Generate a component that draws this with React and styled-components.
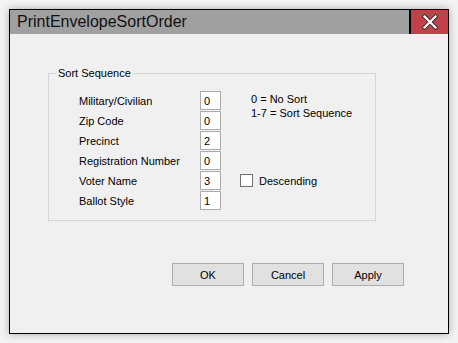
import React from "react";
import styled, { createGlobalStyle } from "styled-components";

const GlobalStyle = createGlobalStyle`
  html, body {
    margin: 0;
    padding: 0;
    background: #f3f3f3;
    font-family: "Liberation Sans", Arial, sans-serif;
  }
`;

const rows = [
  { label: "Military/Civilian", value: "0" },
  { label: "Zip Code", value: "0" },
  { label: "Precinct", value: "2" },
  { label: "Registration Number", value: "0" },
  { label: "Voter Name", value: "3" },
  { label: "Ballot Style", value: "1" },
];

const App = () => {
  return (
    <Page>
      <GlobalStyle />
      <Window>
        <TitleBar>
          <Title>PrintEnvelopeSortOrder</Title>
          <CloseButton aria-label="Close">
            <svg width="16" height="16" viewBox="0 0 16 16">
              <path
                d="M2.5 2.5 L13.5 13.5 M13.5 2.5 L2.5 13.5"
                stroke="#3a2a2c"
                strokeWidth="4"
                strokeLinecap="square"
              />
              <path
                d="M2.5 2.5 L13.5 13.5 M13.5 2.5 L2.5 13.5"
                stroke="#ffffff"
                strokeWidth="2.2"
                strokeLinecap="square"
              />
            </svg>
          </CloseButton>
        </TitleBar>

        <Body>
          <GroupBox>
            <Legend>Sort Sequence</Legend>
            <FieldGrid>
              {rows.map((row, i) => (
                <React.Fragment key={row.label}>
                  <FieldLabel style={{ gridRow: i + 1 }}>{row.label}</FieldLabel>
                  <NumberBox style={{ gridRow: i + 1 }} defaultValue={row.value} />
                </React.Fragment>
              ))}
              <Notes>
                <span>0 = No Sort</span>
                <span>1-7 = Sort Sequence</span>
              </Notes>
              <CheckRow>
                <CheckBox />
                <span>Descending</span>
              </CheckRow>
            </FieldGrid>
          </GroupBox>

          <ButtonRow>
            <Button>OK</Button>
            <Button>Cancel</Button>
            <Button>Apply</Button>
          </ButtonRow>
        </Body>
      </Window>
    </Page>
  );
};

export default App;

/* ---------------- Styled Components ---------------- */

const Page = styled.div`
  width: 458px;
  height: 343px;
  padding: 9px;
  box-sizing: border-box;
`;

const Window = styled.div`
  width: 440px;
  height: 325px;
  box-sizing: border-box;
  border: 1px solid #000;
  background: #f0f0f0;
  box-shadow: 0 0 8px rgba(0, 0, 0, 0.3);
  display: flex;
  flex-direction: column;
`;

const TitleBar = styled.div`
  height: 24px;
  background: #a0a0a0;
  display: flex;
  align-items: stretch;
  justify-content: space-between;
`;

const Title = styled.div`
  font-size: 16px;
  color: #111;
  padding-left: 7px;
  line-height: 24px;
`;

const CloseButton = styled.div`
  width: 37px;
  background: #c1404a;
  border-left: 2px solid #000;
  display: flex;
  align-items: center;
  justify-content: center;
`;

const Body = styled.div`
  flex: 1;
  padding: 39px 0 0 38px;
  font-size: 11px;
  color: #000;
`;

const GroupBox = styled.div`
  position: relative;
  width: 328px;
  height: 148px;
  box-sizing: border-box;
  border: 1px solid #d6d6d6;
  padding: 17px 0 0 30px;
`;

const Legend = styled.span`
  position: absolute;
  top: -7px;
  left: 7px;
  padding: 0 2px;
  background: #f0f0f0;
  font-size: 11px;
  line-height: 13px;
`;

const FieldGrid = styled.div`
  display: grid;
  grid-template-columns: 121px 21px 19px auto;
  grid-auto-rows: 20px;
`;

const FieldLabel = styled.div`
  grid-column: 1;
  display: flex;
  align-items: center;
  line-height: 13px;
`;

const NumberBox = styled.input`
  grid-column: 2;
  width: 21px;
  height: 19px;
  box-sizing: border-box;
  border: 1px solid #ababab;
  background: #fff;
  padding: 0 0 0 3px;
  margin: 0;
  font-family: "Liberation Sans", Arial, sans-serif;
  font-size: 11px;
  color: #000;
  outline: none;
`;

const Notes = styled.div`
  grid-column: 4;
  grid-row: 1 / span 2;
  display: flex;
  flex-direction: column;
  padding: 1px 0 0 11px;
  line-height: 14px;
`;

const CheckRow = styled.div`
  grid-column: 4;
  grid-row: 5;
  display: flex;
  align-items: center;
  gap: 6px;
  height: 19px;
`;

const CheckBox = styled.span`
  width: 13px;
  height: 13px;
  box-sizing: border-box;
  border: 1px solid #707070;
  background: #fff;
`;

const ButtonRow = styled.div`
  display: flex;
  gap: 8px;
  margin: 42px 0 0 124px;
`;

const Button = styled.div`
  width: 72px;
  height: 23px;
  box-sizing: border-box;
  border: 1px solid #adadad;
  background: #e1e1e1;
  display: flex;
  align-items: center;
  justify-content: center;
  font-size: 11px;
`;
